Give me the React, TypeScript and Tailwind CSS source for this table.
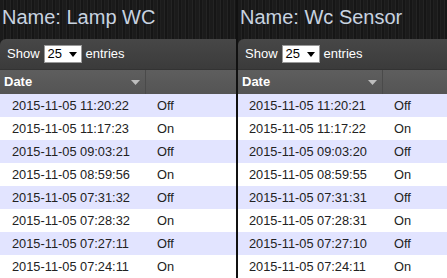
import React from 'react';

type Row = { date: string; state: string };

const lamp: Row[] = [
  { date: '2015-11-05 11:20:22', state: 'Off' },
  { date: '2015-11-05 11:17:23', state: 'On' },
  { date: '2015-11-05 09:03:21', state: 'Off' },
  { date: '2015-11-05 08:59:56', state: 'On' },
  { date: '2015-11-05 07:31:32', state: 'Off' },
  { date: '2015-11-05 07:28:32', state: 'On' },
  { date: '2015-11-05 07:27:11', state: 'Off' },
  { date: '2015-11-05 07:24:11', state: 'On' },
];

const sensor: Row[] = [
  { date: '2015-11-05 11:20:21', state: 'Off' },
  { date: '2015-11-05 11:17:22', state: 'On' },
  { date: '2015-11-05 09:03:20', state: 'Off' },
  { date: '2015-11-05 08:59:55', state: 'On' },
  { date: '2015-11-05 07:31:31', state: 'Off' },
  { date: '2015-11-05 07:28:31', state: 'On' },
  { date: '2015-11-05 07:27:10', state: 'Off' },
  { date: '2015-11-05 07:24:11', state: 'On' },
];

const Panel: React.FC<{ name: string; rows: Row[]; dateW: string; pad: string }> = ({ name, rows, dateW, pad }) => (
  <div className="flex flex-col min-w-0">
    <div className="h-[39px] pt-[5px] pl-[2px] text-[20px] leading-[24px] text-[#c8d3e0] whitespace-nowrap">
      Name: {name}
    </div>
    <div className="rounded-tl-[6px] overflow-hidden">
      <div className="h-[31px] flex items-center pl-[7px] gap-[4px] text-[13px] text-white bg-[linear-gradient(#474747,#3b3b3b)] border-b border-[#333]">
        <span>Show</span>
        <div className="w-[38px] h-[18px] bg-white border border-[#999] flex items-center pl-[3px] pr-[4px] justify-between text-black text-[13px]">
          <span>25</span>
          <svg width="8" height="5" viewBox="0 0 8 5"><path d="M0 0h8L4 5z" fill="#000" /></svg>
        </div>
        <span>entries</span>
      </div>
      <div className="h-[24px] flex bg-[linear-gradient(#5e5e5e,#545454)] text-white font-bold text-[13px]">
        <div className={`${dateW} flex items-center justify-between pl-[4px] pr-[5px] border-r border-[#4a4a4a]`}>
          <span>Date</span>
          <svg width="9" height="5" viewBox="0 0 9 5"><path d="M0 0h9L4.5 5z" fill="#bdbdbd" /></svg>
        </div>
        <div className="flex-1" />
      </div>
      {rows.map((r, i) => (
        <div key={i} className={`h-[23px] flex items-center text-[12.8px] text-[#222] ${i % 2 === 0 ? 'bg-[#e2e4ff]' : 'bg-white'}`}>
          <div className={`${dateW} ${pad} whitespace-nowrap`}>{r.date}</div>
          <div className="pl-[11px]">{r.state}</div>
        </div>
      ))}
    </div>
  </div>
);

export default function App() {
  return (
    <div
      className="w-[447px] h-[278px] overflow-hidden flex bg-[repeating-linear-gradient(90deg,#1b1b1b_0px,#1b1b1b_3px,#242424_3px,#242424_4px,#161616_4px,#161616_6px,#202020_6px,#202020_7px)]"
      style={{ fontFamily: '"Liberation Sans", Arial, sans-serif' }}
    >
      <div className="w-[236px] shrink-0">
        <Panel name="Lamp WC" rows={lamp} dateW="w-[146px]" pad="pl-[12px]" />
      </div>
      <div className="w-[2px] shrink-0 bg-[#111]" />
      <div className="flex-1 min-w-0">
        <Panel name="Wc Sensor" rows={sensor} dateW="w-[145px]" pad="pl-[11px]" />
      </div>
    </div>
  );
}
